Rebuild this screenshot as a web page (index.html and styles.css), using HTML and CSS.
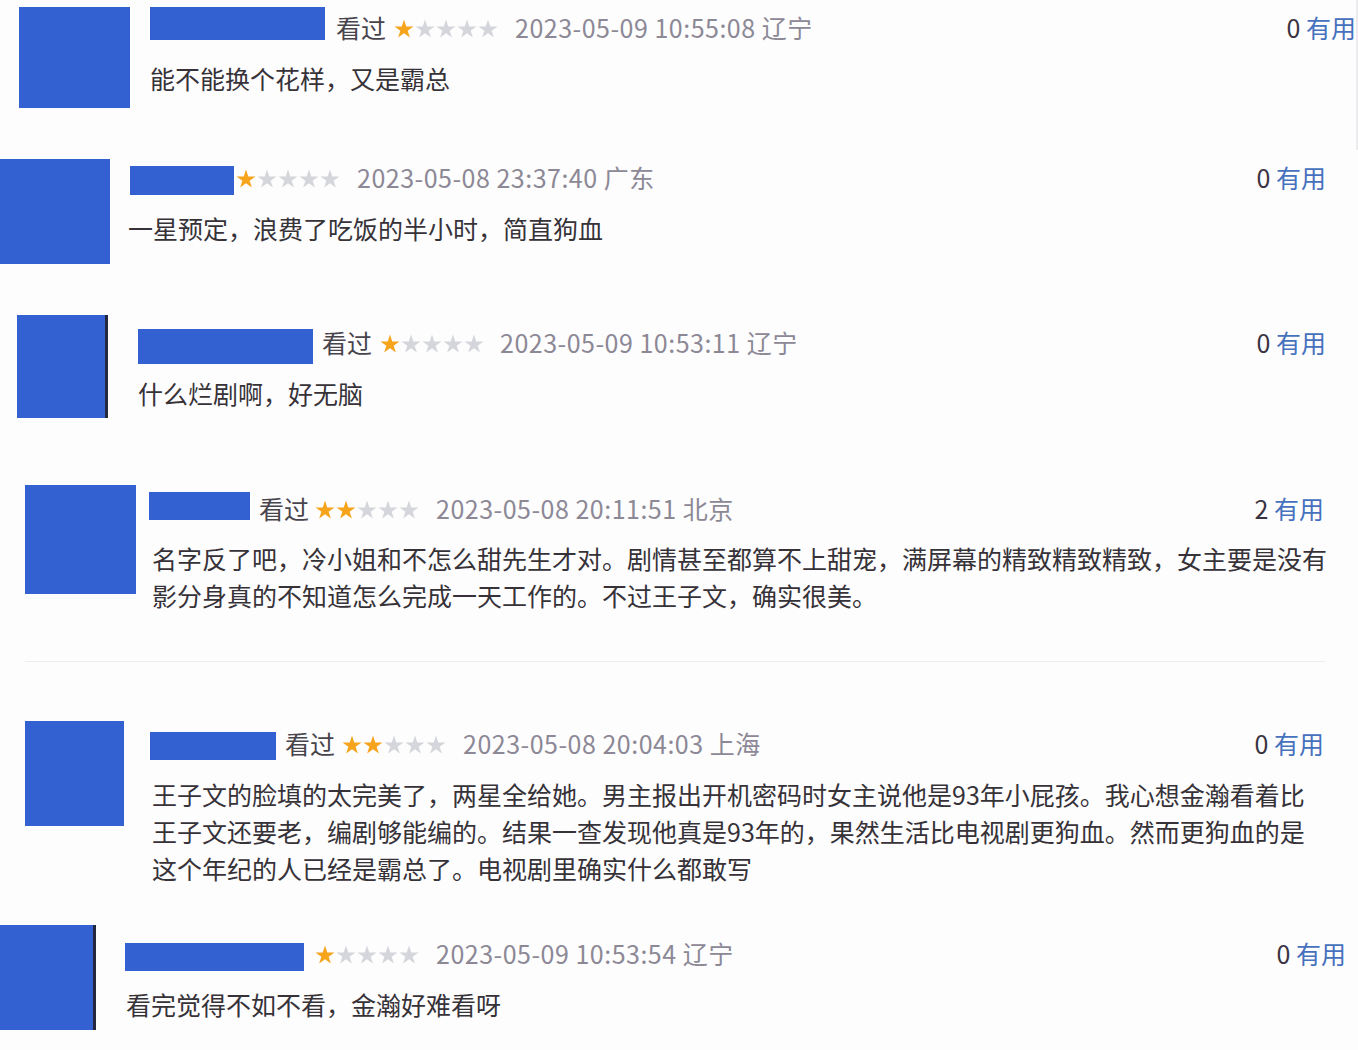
FILE: index.html
```html
<!DOCTYPE html>
<html lang="zh-CN">
<head>
  <meta charset="UTF-8">
  <meta name="viewport" content="width=device-width, initial-scale=1.0">
  <title>短评</title>
  <link rel="stylesheet" href="styles.css">
</head>
<body>
  <svg class="defs" width="0" height="0">
    <symbol id="star" viewBox="0 0 20 20">
      <polygon points="10,0.5 12.25,7.41 19.51,7.41 13.63,11.68 15.88,18.59 10,14.32 4.12,18.59 6.37,11.68 0.49,7.41 7.75,7.41"/>
    </symbol>
  </svg>

  <div class="review r1">
    <div class="avatar"></div>
    <div class="body">
      <div class="head">
        <span class="name"></span>
        <span class="seen">看过</span>
        <svg class="stars" viewBox="0 0 105 20">
          <use href="#star" class="on" width="20" height="20"/>
          <use href="#star" x="21" width="20" height="20"/>
          <use href="#star" x="42" width="20" height="20"/>
          <use href="#star" x="63" width="20" height="20"/>
          <use href="#star" x="84" width="20" height="20"/>
        </svg>
        <span class="time">2023-05-09 10:55:08 辽宁</span>
        <span class="useful"><b>0</b> 有用</span>
      </div>
      <p class="text">能不能换个花样，又是霸总</p>
    </div>
  </div>

  <div class="review r2">
    <div class="avatar"></div>
    <div class="body">
      <div class="head">
        <span class="name"></span>
        <svg class="stars" viewBox="0 0 105 20">
          <use href="#star" class="on" width="20" height="20"/>
          <use href="#star" x="21" width="20" height="20"/>
          <use href="#star" x="42" width="20" height="20"/>
          <use href="#star" x="63" width="20" height="20"/>
          <use href="#star" x="84" width="20" height="20"/>
        </svg>
        <span class="time">2023-05-08 23:37:40 广东</span>
        <span class="useful"><b>0</b> 有用</span>
      </div>
      <p class="text">一星预定，浪费了吃饭的半小时，简直狗血</p>
    </div>
  </div>

  <div class="review r3">
    <div class="avatar"></div>
    <div class="body">
      <div class="head">
        <span class="name"></span>
        <span class="seen">看过</span>
        <svg class="stars" viewBox="0 0 105 20">
          <use href="#star" class="on" width="20" height="20"/>
          <use href="#star" x="21" width="20" height="20"/>
          <use href="#star" x="42" width="20" height="20"/>
          <use href="#star" x="63" width="20" height="20"/>
          <use href="#star" x="84" width="20" height="20"/>
        </svg>
        <span class="time">2023-05-09 10:53:11 辽宁</span>
        <span class="useful"><b>0</b> 有用</span>
      </div>
      <p class="text">什么烂剧啊，好无脑</p>
    </div>
  </div>

  <div class="review r4">
    <div class="avatar"></div>
    <div class="body">
      <div class="head">
        <span class="name"></span>
        <span class="seen">看过</span>
        <svg class="stars" viewBox="0 0 105 20">
          <use href="#star" class="on" width="20" height="20"/>
          <use href="#star" class="on" x="21" width="20" height="20"/>
          <use href="#star" x="42" width="20" height="20"/>
          <use href="#star" x="63" width="20" height="20"/>
          <use href="#star" x="84" width="20" height="20"/>
        </svg>
        <span class="time">2023-05-08 20:11:51 北京</span>
        <span class="useful"><b>2</b> 有用</span>
      </div>
      <p class="text">名字反了吧，冷小姐和不怎么甜先生才对。剧情甚至都算不上甜宠，满屏幕的精致精致精致，女主要是没有<br>影分身真的不知道怎么完成一天工作的。不过王子文，确实很美。</p>
    </div>
  </div>

  <div class="review r5">
    <div class="avatar"></div>
    <div class="body">
      <div class="head">
        <span class="name"></span>
        <span class="seen">看过</span>
        <svg class="stars" viewBox="0 0 105 20">
          <use href="#star" class="on" width="20" height="20"/>
          <use href="#star" class="on" x="21" width="20" height="20"/>
          <use href="#star" x="42" width="20" height="20"/>
          <use href="#star" x="63" width="20" height="20"/>
          <use href="#star" x="84" width="20" height="20"/>
        </svg>
        <span class="time">2023-05-08 20:04:03 上海</span>
        <span class="useful"><b>0</b> 有用</span>
      </div>
      <p class="text">王子文的脸填的太完美了，两星全给她。男主报出开机密码时女主说他是93年小屁孩。我心想金瀚看着比<br>王子文还要老，编剧够能编的。结果一查发现他真是93年的，果然生活比电视剧更狗血。然而更狗血的是<br>这个年纪的人已经是霸总了。电视剧里确实什么都敢写</p>
    </div>
  </div>

  <div class="review r6">
    <div class="avatar"></div>
    <div class="body">
      <div class="head">
        <span class="name"></span>
        <svg class="stars" viewBox="0 0 105 20">
          <use href="#star" class="on" width="20" height="20"/>
          <use href="#star" x="21" width="20" height="20"/>
          <use href="#star" x="42" width="20" height="20"/>
          <use href="#star" x="63" width="20" height="20"/>
          <use href="#star" x="84" width="20" height="20"/>
        </svg>
        <span class="time">2023-05-09 10:53:54 辽宁</span>
        <span class="useful"><b>0</b> 有用</span>
      </div>
      <p class="text">看完觉得不如不看，金瀚好难看呀</p>
    </div>
  </div>
</body>
</html>
```

FILE: styles.css
```css
body {
  margin: 0;
  background-color: #fdfdfe;
  font-family: "Noto Sans CJK SC", "Noto Sans", sans-serif;
  color: #363238;
  overflow: hidden;
}
.defs {
  position: absolute;
  width: 0;
  height: 0;
}
.review {
  display: flex;
  align-items: flex-start;
}
.avatar {
  flex: none;
  background-color: #3461d2;
}
.body {
  flex: 1;
  min-width: 0;
}
.head {
  display: flex;
  align-items: center;
  box-sizing: border-box;
  height: 44px;
  padding-bottom: 4px;
  font-size: 25px;
  white-space: nowrap;
}
.name {
  flex: none;
  align-self: flex-start;
  background-color: #3461d2;
}
.seen {
  margin-left: 10px;
  color: #48444c;
}
.stars {
  flex: none;
  width: 105px;
  height: 20px;
  margin-top: 4px;
  margin-left: 7px;
  fill: #d4d6db;
}
.stars .on {
  fill: #f6a41c;
}
.time {
  margin-left: 16px;
  color: #8c8895;
  letter-spacing: 0.5px;
}
.useful {
  margin-left: auto;
  color: #4671bd;
}
.useful b {
  font-weight: normal;
  color: #3a3442;
}
.text {
  margin: 9px 0 0;
  font-size: 25px;
  line-height: 37px;
  white-space: nowrap;
}

/* row 1 */
.r1 {
  height: 150px;
  padding-left: 19px;
  box-shadow: inset -2px 0 0 #ececef;
}
.r1 .avatar { width: 111px; height: 101px; margin-top: 7px; }
.r1 .body { margin-left: 20px; padding-right: 2px; }
.r1 .head { margin-top: 7px; }
.r1 .name { width: 175px; height: 33px; }
.r1 .seen { margin-left: 11px; }
.r1 .stars { margin-left: 8px; }

/* row 2 */
.r2 { height: 150px; }
.r2 .avatar { width: 110px; height: 105px; margin-top: 9px; }
.r2 .body { margin-left: 18px; padding-right: 32px; }
.r2 .head { margin-top: 7px; }
.r2 .name { width: 104px; height: 29px; margin: 9px 0 0 2px; }
.r2 .stars { margin-left: 2px; }

/* row 3 */
.r3 {
  height: 170px;
  padding-left: 17px;
}
.r3 .avatar {
  width: 91px;
  height: 103px;
  margin-top: 15px;
  background: linear-gradient(to right, #3461d2 calc(100% - 3px), #23283f 0);
}
.r3 .body { margin-left: 30px; padding-right: 32px; }
.r3 .head { margin-top: 22px; }
.r3 .name { width: 175px; height: 35px; margin-top: 7px; }
.r3 .seen { margin-left: 9px; }
.r3 .stars { margin-left: 8px; }
.r3 .time { margin-left: 15px; }

/* row 4 */
.r4 {
  height: 191px;
  margin: 0 33px 38px 25px;
  border-bottom: 1px solid #ebedf1;
}
.r4 .avatar { width: 111px; height: 109px; margin-top: 15px; }
.r4 .body { margin-left: 13px; padding-right: 1px; }
.r4 .head { margin-top: 18px; }
.r4 .name { width: 101px; height: 28px; margin-top: 4px; }
.r4 .seen { margin-left: 9px; }
.r4 .stars { margin-left: 6px; }
.r4 .text { margin: 8px 0 0 3px; }

/* row 5 */
.r5 {
  height: 210px;
  padding-left: 25px;
}
.r5 .avatar { width: 99px; height: 105px; margin-top: 21px; }
.r5 .body { margin-left: 26px; padding-right: 34px; }
.r5 .head { margin-top: 23px; }
.r5 .name { width: 126px; height: 28px; margin-top: 9px; }
.r5 .seen { margin-left: 9px; }
.r5 .text { margin-left: 2px; }

/* row 6 */
.r6 { height: 140px; }
.r6 .avatar {
  width: 96px;
  height: 105px;
  margin-top: 15px;
  background: linear-gradient(to right, #3461d2 calc(100% - 3px), #23283f 0);
}
.r6 .body { margin-left: 29px; padding-right: 12px; }
.r6 .head { margin-top: 23px; }
.r6 .name { width: 179px; height: 28px; margin-top: 10px; }
.r6 .stars { margin-left: 11px; }
.r6 .text { margin-left: 1px; }
```
